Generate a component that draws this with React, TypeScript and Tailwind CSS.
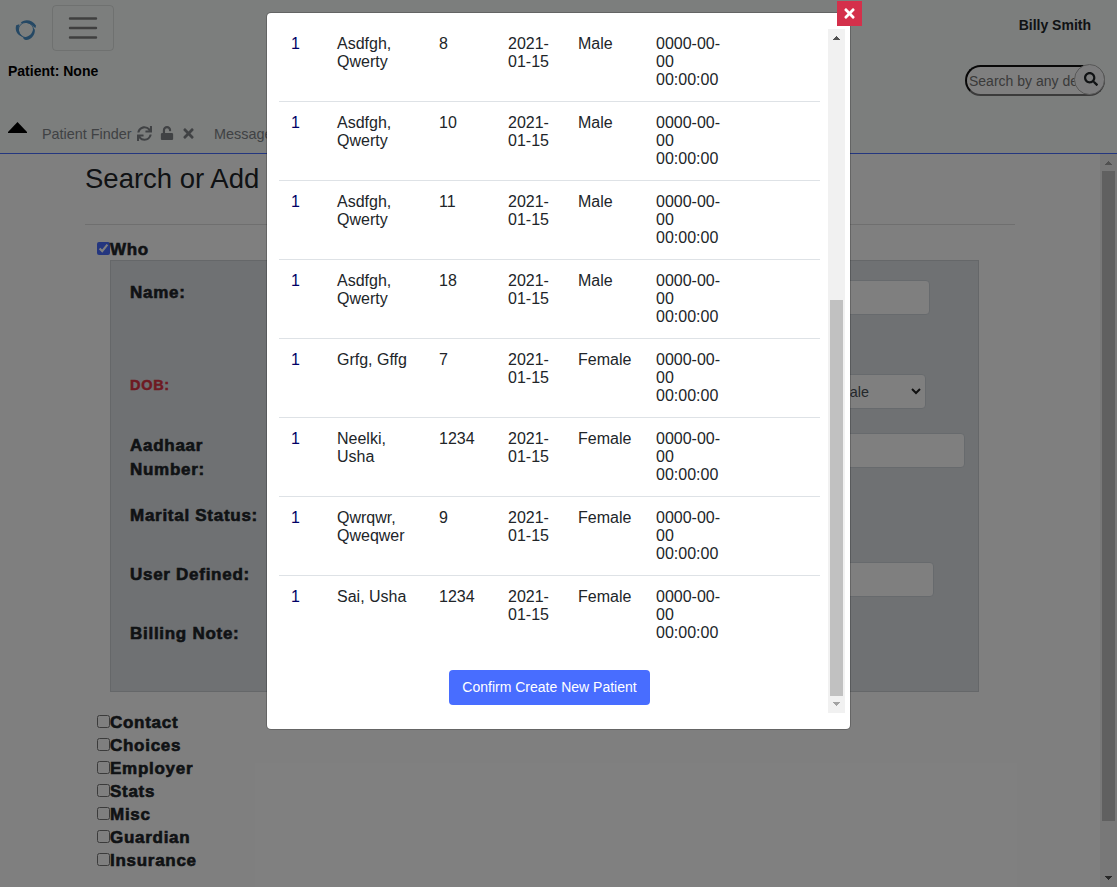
import React from "react";
import { FaSearch, FaSync, FaTimes, FaUnlock } from "react-icons/fa";

type Row = { name: string; pid: string; sex: string };

const rows: Row[] = [
  { name: "Asdfgh,\nQwerty", pid: "8", sex: "Male" },
  { name: "Asdfgh,\nQwerty", pid: "10", sex: "Male" },
  { name: "Asdfgh,\nQwerty", pid: "11", sex: "Male" },
  { name: "Asdfgh,\nQwerty", pid: "18", sex: "Male" },
  { name: "Grfg, Gffg", pid: "7", sex: "Female" },
  { name: "Neelki,\nUsha", pid: "1234", sex: "Female" },
  { name: "Qwrqwr,\nQweqwer", pid: "9", sex: "Female" },
  { name: "Sai, Usha", pid: "1234", sex: "Female" },
];

const sections = ["Contact", "Choices", "Employer", "Stats", "Misc", "Guardian", "Insurance"];

function Arrow({ up, className }: { up?: boolean; className: string }) {
  return (
    <svg width="7" height="4" viewBox="0 0 7 4" className={className} shapeRendering="crispEdges">
      <path d={up ? "M3 0h1v1h1v1h1v1h1v1H0V3h1V2h1V1h1z" : "M0 0h7v1H6v1H5v1H4v1H3V3H2V2H1V1H0z"} fill="currentColor" />
    </svg>
  );
}

function Check({ label, checked }: { label: string; checked?: boolean }) {
  return (
    <label className="flex h-[23px] items-start">
      <input type="checkbox" defaultChecked={checked} className="mt-1 size-[13px] shrink-0 accent-[#486dff]" />
      <Bold>{label}</Bold>
    </label>
  );
}

function Bold({ children }: { children: React.ReactNode }) {
  return (
    <span className="text-[17px] leading-[23px] font-bold tracking-[0.72px] whitespace-pre-line [-webkit-text-stroke:0.6px_#212529]">
      {children}
    </span>
  );
}

function Field({ label, className, children }: { label: React.ReactNode; className: string; children?: React.ReactNode }) {
  return (
    <div className={`flex items-start justify-between pl-[19px] ${className}`}>
      <div className="pt-px">{label}</div>
      {children}
    </div>
  );
}

function Header() {
  return (
    <header className="flex h-[154px] shrink-0 justify-between border-b border-[#486dff] bg-[#f8fcfa]">
      <div className="flex flex-col">
        <div className="flex h-[51px] items-start pt-[5px]">
          <svg width="22" height="22" viewBox="0 0 22 22" className="mt-[14px] ml-[15px]" fill="#4a90c8">
            <path d="M5.500 4.200C9-.2 17 .4 21 6.500l-.5 2.600-1.200-.8C16 4 10 2.800 5.500 4.200z" />
            <path d="M1.200 6.200 4.400 5.200C2.600 10.500 4.500 16 9 17.600 3.500 17.500-.7 12.300 1.200 6.200z" />
            <path d="M8 18.200c6 .4 10.400-4.200 10-9.200l1.800 1.600c.7 5-3.600 10.600-8.800 10.400-1.500-.1-2.600-.9-3-2.800z" />
            <circle cx="11" cy="11" r="7.600" fill="none" stroke="#4a90c8" strokeWidth=".9" />
          </svg>
          <button className="ml-[15px] flex h-[46px] w-[62px] items-center justify-center rounded-[4px] border border-black/10">
            <svg width="30" height="24" viewBox="0 0 30 24" stroke="#7f7f7f" strokeWidth="2.400" strokeLinecap="round">
              <path d="M2 2.500h26M2 12h26M2 21.500h26" />
            </svg>
          </button>
        </div>
        <div className="mt-[10px] ml-2 text-[14px] leading-5 font-bold text-black">Patient: None</div>
        <div className="mt-[41px] flex text-[14.4px] leading-[22px] text-[#808489]">
          <svg width="19" height="11" viewBox="0 0 19 11" className="ml-2">
            <path d="M9.500 0 19 10v1H0v-1z" fill="#000" />
          </svg>
          <div className="ml-[15px] flex items-start pt-px">
            <span className="w-[90px] whitespace-nowrap">Patient Finder</span>
            <FaSync className="mt-[3px] ml-[5px] size-[15px]" />
            <FaUnlock className="mt-[3px] ml-[8px] size-[14px]" />
            <FaTimes className="mt-[3px] ml-[7px] size-[15px]" />
            <span className="ml-[18px] whitespace-nowrap">Message</span>
          </div>
        </div>
      </div>
      <div className="flex flex-col items-end">
        <div className="mt-[15px] mr-[26px] text-[14px] leading-5 font-bold text-[#212529]">Billy Smith</div>
        <div className="relative mt-[30px] mr-3 flex h-[31px] w-[140px] items-center rounded-full border-2 border-t-[#111] border-r-[#767676] border-b-[#767676] border-l-[#111] bg-white pt-[2px] pl-[2px] text-[14px] whitespace-nowrap text-[#757575]">
          Search by any de
          <span className="absolute -top-[3px] -right-[2px] flex size-[31px] items-center justify-center rounded-full border border-[#b0b0b0] bg-[#f8f9fa] pb-[2px] pl-[2px] text-[#212529]">
            <FaSearch className="size-[14px]" />
          </span>
        </div>
      </div>
    </header>
  );
}

const input = "h-[35px] w-[200px] shrink-0 rounded-[4px] border border-[#ced4da] bg-white";

function Page() {
  return (
    <main className="flex flex-1 bg-white">
      <div className="flex-1 pl-[85px]">
        <h2 className="mt-[9px] h-[32px] text-[27.5px] leading-8">Search or Add</h2>
        <hr className="mt-[29px] mr-[85px] border-[#dfdfdf]" />
        <div className="mt-[13px] pl-3">
          <Check label="Who" checked />
        </div>
        <div className="-mt-px ml-[25px] flex h-[432px] w-[869px] flex-col border border-[#cbced3] bg-[#dee2e6] pt-[19px]">
          <Field className="h-[94px] pr-[48px]" label={<Bold>Name:</Bold>}>
            <div className={input} />
          </Field>
          <Field
            className="h-[59px] pr-[52px]"
            label={<span className="block text-[14.5px] leading-[20px] font-bold tracking-[0.7px] text-[#dc3545] [-webkit-text-stroke:0.5px_#dc3545]">DOB:</span>}
          >
            <div className={`${input} flex items-center justify-between pr-1 pl-[94px] text-[14.4px] text-[#495057]`}>
              <span className="pt-[2px]">Female</span>
              <svg width="10" height="7" viewBox="0 0 10 7" fill="none" stroke="#222" strokeWidth="2">
                <path d="m1 1 4 4 4-4" />
              </svg>
            </div>
          </Field>
          <Field className="h-[70px] pr-[13px]" label={<Bold>{"Aadhaar\nNumber:"}</Bold>}>
            <div className={input} />
          </Field>
          <Field className="h-[59px]" label={<Bold>Marital Status:</Bold>} />
          <Field className="h-[59px] pr-[44px]" label={<Bold>User Defined:</Bold>}>
            <div className={input} />
          </Field>
          <Field className="h-[59px]" label={<Bold>Billing Note:</Bold>} />
        </div>
        <div className="mt-[19px] flex flex-col pl-3">
          {sections.map((s) => (
            <Check key={s} label={s} />
          ))}
        </div>
      </div>
      <div className="flex w-[17px] flex-col items-center bg-[#f1f1f1]">
        <Arrow up className="mt-[7px] mb-[6px] text-[#a3a3a3]" />
        <div className="h-[650px] w-[13px] bg-[#c1c1c1]" />
        <Arrow className="mt-[55px] text-[#505050]" />
      </div>
    </main>
  );
}

function Dialog() {
  return (
    <div className="absolute top-3 left-[266px] flex h-[718px] w-[585px] rounded-[5px] border border-black/20 bg-white bg-clip-padding pt-4 pb-4 pl-3 text-[16px] leading-[18px] text-[#212529]">
      <div className="w-[541px]">
        <div className="-mt-[7px]">
          {rows.map((r, i) => (
            <div
              key={i}
              className={`grid h-[79px] grid-cols-[46px_102px_69px_70px_78px_1fr] border-t pt-3 whitespace-pre-line *:pl-3 ${i === 0 ? "border-transparent" : "border-[#dee2e6]"}`}
            >
              <span className="text-[#000066]">1</span>
              <span>{r.name}</span>
              <span>{r.pid}</span>
              <span>{"2021-\n01-15"}</span>
              <span>{r.sex}</span>
              <span>{"0000-00-\n00\n00:00:00"}</span>
            </div>
          ))}
        </div>
        <div className="mt-4 flex justify-center">
          <button className="h-[35px] w-[201px] rounded-[4px] bg-[#486dff] pb-px text-[14px] whitespace-nowrap text-white">
            Confirm Create New Patient
          </button>
        </div>
      </div>
      <div className="ml-2 flex h-[684px] w-[17px] flex-col items-center bg-[#f1f1f1]">
        <Arrow up className="mt-[7px] text-[#505050]" />
        <div className="mt-[260px] h-[396px] w-[13px] bg-[#c1c1c1]" />
        <Arrow className="mt-[6px] text-[#a3a3a3]" />
      </div>
      <button className="absolute -top-3 -right-3 flex size-[25px] items-center justify-center bg-[#d4304b] pb-px text-white">
        <FaTimes className="size-[15px]" />
      </button>
    </div>
  );
}

export default function App() {
  return (
    <div className="relative flex h-[887px] w-[1117px] flex-col overflow-hidden font-['Liberation_Sans',Arial,sans-serif] text-[#212529]">
      <Header />
      <Page />
      <div className="absolute inset-0 bg-black/50" />
      <Dialog />
    </div>
  );
}
